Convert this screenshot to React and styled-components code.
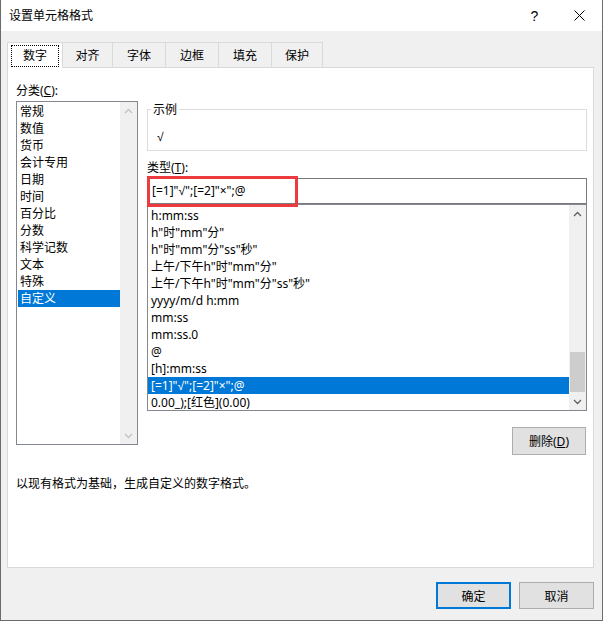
import React from 'react';
import styled, { createGlobalStyle } from 'styled-components';

const GlobalStyle = createGlobalStyle`
  html, body { margin: 0; padding: 0; background: #f0f0f0; }
  body {
    font-family: "Noto Sans", "Liberation Sans", "Noto Sans CJK SC", sans-serif;
    font-size: 12px;
    color: #000;
  }
  * { box-sizing: border-box; }
`;

const categories = ['常规', '数值', '货币', '会计专用', '日期', '时间', '百分比', '分数', '科学记数', '文本', '特殊', '自定义'];

const formats = [
    'h:mm:ss',
    'h"时"mm"分"',
    'h"时"mm"分"ss"秒"',
    '上午/下午h"时"mm"分"',
    '上午/下午h"时"mm"分"ss"秒"',
    'yyyy/m/d h:mm',
    'mm:ss',
    'mm:ss.0',
    '@',
    '[h]:mm:ss',
    '[=1]"√";[=2]"×";@',
    '0.00_);[红色](0.00)',
];

const tabs = [
    { label: '数字', width: 56 },
    { label: '对齐', width: 51 },
    { label: '字体', width: 54 },
    { label: '边框', width: 54 },
    { label: '填充', width: 54 },
    { label: '保护', width: 52 },
];

const Chevron = ({ up, color }) => (
    <svg width="9" height="6" viewBox="0 0 9 6">
        <polyline
            points={up ? '1,5 4.5,1.5 8,5' : '1,1 4.5,4.5 8,1'}
            fill="none"
            stroke={color}
            strokeWidth="1.3"
        />
    </svg>
);

const CloseIcon = () => (
    <svg width="11" height="11" viewBox="0 0 11 11">
        <path d="M0.5 0.5 L10.5 10.5 M10.5 0.5 L0.5 10.5" stroke="#000" strokeWidth="1" />
    </svg>
);

export default function App() {
    return (<>
        <GlobalStyle />
        <Window>
            <TitleBar>
                <Title>设置单元格格式</Title>
                <TitleButton>?</TitleButton>
                <TitleButton><CloseIcon /></TitleButton>
            </TitleBar>
            <Body>
                <TabStrip>
                    {tabs.map((t, i) => (
                        <Tab key={t.label} $width={t.width} $active={i === 0}>
                            {i === 0 && <FocusBox />}
                            {t.label}
                        </Tab>
                    ))}
                </TabStrip>
                <Panel>
                    <TopArea>
                        <LeftCol>
                            <Label>分类(<u>C</u>):</Label>
                            <ListBox $height={344} $top={2}>
                                <Rows $pad="1px 0 0 1px">
                                    {categories.map((c) => (
                                        <Row key={c} $pl={2} $selected={c === '自定义'}>{c}</Row>
                                    ))}
                                </Rows>
                                <ScrollBar>
                                    <Arrow><Chevron up color="#c2c2c2" /></Arrow>
                                    <Track />
                                    <Arrow><Chevron color="#c2c2c2" /></Arrow>
                                </ScrollBar>
                            </ListBox>
                        </LeftCol>
                        <RightCol>
                            <Sample>
                                <Legend>示例</Legend>
                                <SampleValue>√</SampleValue>
                            </Sample>
                            <TypeLabel>类型(<u>T</u>):</TypeLabel>
                            <InputWrap>
                                <TypeInput>[=1]"√";[=2]"×";@</TypeInput>
                                <RedMark />
                            </InputWrap>
                            <ListBox $height={207} $top={0}>
                                <Rows $pad="2px 0 0 0">
                                    {formats.map((f, i) => (
                                        <Row key={i} $pl={3} $selected={i === 10}>{f}</Row>
                                    ))}
                                </Rows>
                                <ScrollBar>
                                    <Arrow><Chevron up color="#606060" /></Arrow>
                                    <Track>
                                        <Thumb />
                                    </Track>
                                    <Arrow><Chevron color="#606060" /></Arrow>
                                </ScrollBar>
                            </ListBox>
                            <DeleteButton>删除(<u>D</u>)</DeleteButton>
                        </RightCol>
                    </TopArea>
                    <Description>以现有格式为基础，生成自定义的数字格式。</Description>
                </Panel>
                <Footer>
                    <Button $primary>确定</Button>
                    <Button>取消</Button>
                </Footer>
            </Body>
        </Window>
    </>
    );
}

const Window = styled.div`
    width: 603px;
    height: 621px;
    display: flex;
    flex-direction: column;
    background: #f0f0f0;
    border: 1px solid #6b6b6b;
    border-top: none;
    overflow: hidden;
`

const TitleBar = styled.div`
    height: 31px;
    flex-shrink: 0;
    display: flex;
    align-items: center;
    background: #fff;
`

const Title = styled.div`
    flex: 1;
    padding-left: 8px;
    line-height: 17px;
`

const TitleButton = styled.div`
    width: 45px;
    height: 31px;
    display: flex;
    align-items: center;
    justify-content: center;
    font-family: "Liberation Sans", sans-serif;
    font-size: 14px;
`

const Body = styled.div`
    flex: 1;
    display: flex;
    flex-direction: column;
    padding: 11px 8px 0 6px;
`

const TabStrip = styled.div`
    display: flex;
    align-items: flex-end;
    height: 25px;
`

const Tab = styled.div`
    position: relative;
    width: ${p => p.$width}px;
    height: ${p => p.$active ? 26 : 25}px;
    margin-bottom: ${p => p.$active ? -1 : 0}px;
    z-index: ${p => p.$active ? 1 : 0};
    display: flex;
    align-items: center;
    justify-content: center;
    background: ${p => p.$active ? '#fff' : '#f0f0f0'};
    border: 1px solid #d9d9d9;
    border-bottom: none;
    margin-right: -1px;
    padding-bottom: 1px;
`

const FocusBox = styled.span`
    position: absolute;
    top: 2px;
    left: 3px;
    right: 3px;
    bottom: 1px;
    border: 1px dotted #000;
`

const Panel = styled.div`
    height: 501px;
    display: flex;
    flex-direction: column;
    background: #fff;
    border: 1px solid #d9d9d9;
    padding: 14px 6px 0 8px;
`

const TopArea = styled.div`
    display: flex;
    gap: 9px;
`

const LeftCol = styled.div`
    width: 122px;
    display: flex;
    flex-direction: column;
`

const RightCol = styled.div`
    width: 440px;
    display: flex;
    flex-direction: column;
    padding-top: 19px;
`

const Label = styled.div`
    line-height: 17px;
    u { text-underline-offset: 1px; }
`

const ListBox = styled.div`
    height: ${p => p.$height}px;
    margin-top: ${p => p.$top}px;
    display: flex;
    border: 1px solid #828790;
    background: #fff;
`

const Rows = styled.div`
    flex: 1;
    overflow: hidden;
    padding: ${p => p.$pad};
`

const Row = styled.div`
    height: 17px;
    line-height: 17px;
    padding-left: ${p => p.$pl}px;
    white-space: nowrap;
    background: ${p => p.$selected ? '#0078d7' : 'transparent'};
    color: ${p => p.$selected ? '#fff' : '#000'};
`

const ScrollBar = styled.div`
    width: 17px;
    display: flex;
    flex-direction: column;
    background: #f0f0f0;
`

const Arrow = styled.div`
    height: 17px;
    display: flex;
    align-items: center;
    justify-content: center;
`

const Track = styled.div`
    flex: 1;
    display: flex;
    flex-direction: column;
    justify-content: flex-end;
`

const Thumb = styled.div`
    height: 40px;
    margin: 0 1px 1px;
    background: #cdcdcd;
`

const Sample = styled.fieldset`
    margin: 0;
    min-width: 0;
    padding: 0 8px 5px 9px;
    border: 1px solid #dcdcdc;
`

const Legend = styled.legend`
    padding: 0 2px;
    margin-left: -6px;
    line-height: 17px;
`

const SampleValue = styled.div`
    margin-top: 10px;
    line-height: 17px;
`

const TypeLabel = styled(Label)`
    margin-top: 8px;
`

const InputWrap = styled.div`
    position: relative;
    margin-top: 2px;
`

const TypeInput = styled.div`
    height: 26px;
    line-height: 24px;
    padding-left: 4px;
    border: 1px solid #7a7a7a;
    background: #fff;
`

const RedMark = styled.div`
    position: absolute;
    left: 0;
    top: -2px;
    width: 151px;
    height: 31px;
    border: 3px solid #ec3a3f;
`

const Button = styled.div`
    width: 75px;
    height: 27px;
    display: flex;
    align-items: center;
    justify-content: center;
    background: #e1e1e1;
    border: ${p => p.$primary ? '2px solid #0078d7' : '1px solid #adadad'};
`

const DeleteButton = styled(Button)`
    align-self: flex-end;
    width: 74px;
    height: 28px;
    margin-top: 16px;
    margin-right: 1px;
`

const Description = styled.div`
    margin-top: 20px;
    line-height: 17px;
`

const Footer = styled.div`
    display: flex;
    justify-content: flex-end;
    gap: 8px;
    margin-top: 14px;
`
